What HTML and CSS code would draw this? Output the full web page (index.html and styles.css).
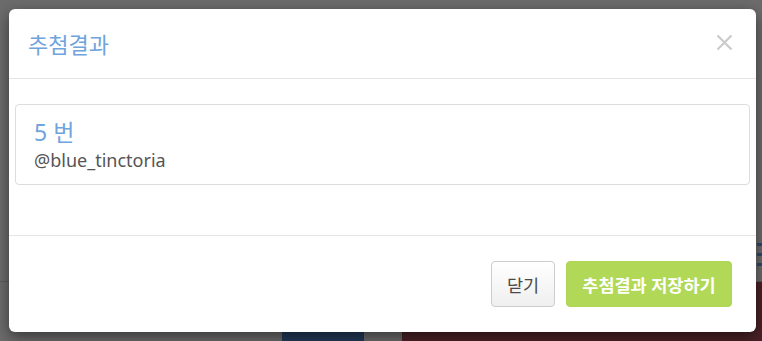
FILE: index.html
```html
<!DOCTYPE html>
<html lang="ko">
<head>
<meta charset="utf-8">
<link rel="stylesheet" href="styles.css">
</head>
<body>
<div class="page">
  <div class="page-top">
    <div class="menu-lines"><span></span><span></span><span></span></div>
  </div>
  <div class="page-bottom">
    <div class="blk gap1"></div>
    <div class="blk navy"></div>
    <div class="blk gap2"></div>
    <div class="blk wine"></div>
  </div>
</div>
<div class="modal">
  <div class="modal-header">
    <h4 class="modal-title">추첨결과</h4>
    <button class="close" aria-label="닫기">
      <svg width="17" height="17" viewBox="0 0 17 17"><path d="M1.5 1.5 L15.5 15.5 M15.5 1.5 L1.5 15.5" stroke="#cbcbcb" stroke-width="2.2" fill="none"/></svg>
    </button>
  </div>
  <div class="modal-body">
    <div class="result-card">
      <div class="result-num">5 번</div>
      <div class="result-user">@blue_tinctoria</div>
    </div>
  </div>
  <div class="modal-footer">
    <button class="btn btn-default">닫기</button>
    <button class="btn btn-save">추첨결과 저장하기</button>
  </div>
</div>
</body>
</html>
```

FILE: styles.css
```css
* { box-sizing: border-box; }
html, body { margin: 0; padding: 0; }
body {
  width: 762px;
  height: 341px;
  overflow: hidden;
  background: #6c6c6c;
  font-family: "Noto Sans", "Noto Sans CJK KR", sans-serif;
  position: relative;
}
.page {
  display: flex;
  flex-direction: column;
  height: 341px;
}
.page-top {
  height: 282px;
  border-bottom: 1px solid #5c5c5c;
  display: flex;
  justify-content: flex-end;
  align-items: flex-start;
  padding-top: 243px;
}
.menu-lines {
  display: flex;
  flex-direction: column;
  gap: 7px;
  width: 5px;
}
.menu-lines span {
  display: block;
  height: 3px;
  background: #2f4a68;
}
.page-bottom {
  flex: 1;
  display: flex;
}
.blk { height: 100%; }
.gap1 { width: 282px; }
.navy { width: 82px; background: #243a59; }
.gap2 { width: 38px; }
.wine { flex: 1; background: #4b2227; }

.modal {
  position: absolute;
  left: 9px;
  top: 9px;
  width: 747px;
  height: 323px;
  background: #fff;
  border-radius: 6px;
  box-shadow: 0 5px 15px rgba(0,0,0,0.5);
  display: flex;
  flex-direction: column;
}
.modal-header {
  display: flex;
  justify-content: space-between;
  align-items: center;
  height: 70px;
  padding: 0 23px 0 19px;
  border-bottom: 1px solid #e5e5e5;
}
.modal-title {
  margin: 0;
  font-size: 22px;
  font-weight: 400;
  line-height: 28px;
  color: #6fa4dc;
  padding-top: 1px;
}
.close {
  border: 0;
  background: none;
  padding: 0;
  display: flex;
  margin-top: -3px;
}
.modal-body {
  padding: 25px 6px 50px;
  border-bottom: 1px solid #e5e5e5;
}
.result-card {
  border: 1px solid #dddddd;
  border-radius: 4px;
  padding: 12px 18px 11px;
}
.result-num {
  font-size: 23px;
  line-height: 30px;
  color: #6fa4dc;
}
.result-user {
  font-size: 18px;
  line-height: 26px;
  color: #555;
}
.modal-footer {
  flex: 1;
  display: flex;
  justify-content: flex-end;
  align-items: flex-start;
  gap: 11px;
  padding: 25px 24px 0;
}
.btn {
  height: 46px;
  border-radius: 4px;
  font-family: "Noto Sans", "Noto Sans CJK KR", sans-serif;
  font-size: 17.5px;
  padding: 0;
  cursor: pointer;
}
.btn-default {
  width: 64px;
  background: linear-gradient(#ffffff, #efefef);
  border: 1px solid #cccccc;
  color: #4a4a4a;
}
.btn-save {
  width: 166px;
  background: #b1d957;
  border: 1px solid #aed553;
  color: #fff;
  font-weight: 700;
}
```
